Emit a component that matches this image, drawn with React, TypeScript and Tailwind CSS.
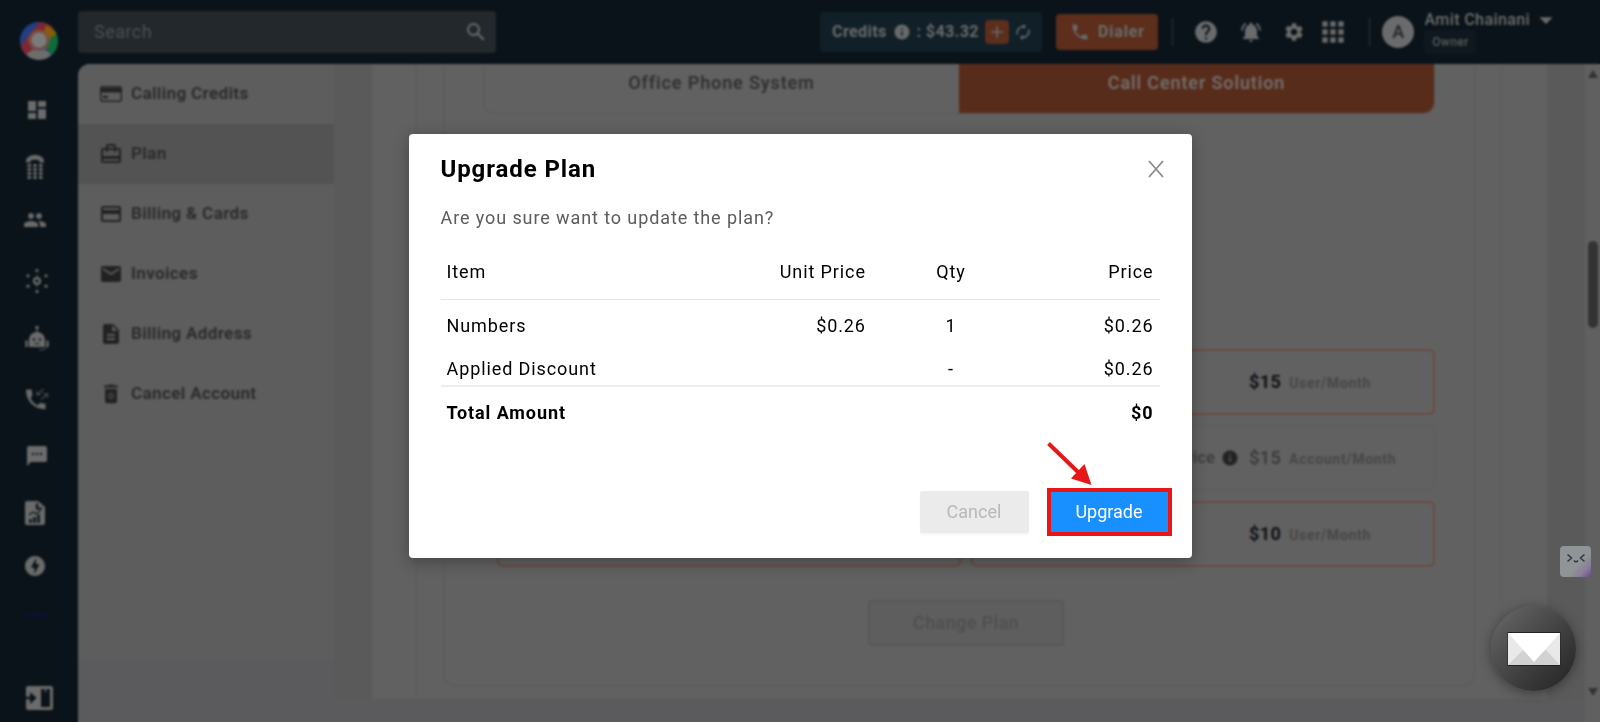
import React from "react";
import {
  MdDashboard,
  MdPeople,
  MdSms,
  MdOfflineBolt,
  MdSearch,
  MdPhone,
  MdHelp,
  MdSettings,
  MdApps,
  MdNotificationsActive,
  MdInfo,
  MdAdd,
  MdArrowDropDown,
  MdOutlineCardTravel,
  MdCreditCard,
  MdEmail,
  MdDescription,
} from "react-icons/md";

function Logo() {
  return (
    <svg viewBox="0 0 40 40" className="size-[38px]" aria-hidden="true">
      <clipPath id="logo-clip">
        <circle cx="20" cy="20" r="20" />
      </clipPath>
      <g clipPath="url(#logo-clip)">
        <rect width="40" height="40" fill="#1d3a7c" />
        <path d="M19 0 L28 0 L36 6 L22 16 L8 28 L3 32 L0 26 Z" fill="#7c2731" />
        <path d="M0 0 H21 L0 24 Z" fill="#213f86" />
        <path d="M28 3 L40 12 L32 20 L24 12 Z" fill="#8a5c06" />
        <path d="M38 12 L42 20 L36 36 L24 24 Z" fill="#106b37" />
        <path d="M2 31 L10 21 L17 28 L8 38 Z" fill="#7c2731" />
        <path d="M8 20 a12 12 0 0 1 24 0 L27 30 H13 Z" fill="#7d5048" opacity="0.8" />
        <circle cx="20" cy="19" r="8" fill="#7b7b78" />
        <path d="M7 34 Q12 28 20 30 Q28 28 33 34 L28 40 H12 Z" fill="#6d6d6a" />
      </g>
    </svg>
  );
}

function Keypad() {
  return (
    <svg viewBox="0 0 18 24" className="h-6 w-[18px]" fill="currentColor" aria-hidden="true">
      <path d="M0 6.5C0 2.5 4 0 9 0s9 2.500 9 6.500v1h-4.500V5.500C12 4.400 6 4.400 4.500 5.500v2H0z" />
      {[9, 13, 17, 21].map((y) =>
        [1.5, 7.2, 13].map((x) => <rect key={`${x}-${y}`} x={x} y={y} width="3.6" height="3" rx="0.8" />)
      )}
    </svg>
  );
}

function Hub() {
  return (
    <svg viewBox="0 0 24 24" className="h-6 w-6" aria-hidden="true">
      <circle cx="12" cy="12" r="3" fill="none" stroke="currentColor" strokeWidth="2.400" />
      <path d="M12 5v4M12 15v4" stroke="currentColor" strokeWidth="0.6" />
      {[[12, 1.6], [12, 22.4], [3, 6.8], [21, 6.8], [3, 17.2], [21, 17.2]].map(([x, y]) => (
        <circle key={`${x}-${y}`} cx={x} cy={y} r="1.600" fill="currentColor" />
      ))}
    </svg>
  );
}

function Robot() {
  return (
    <svg viewBox="0 0 24 26" className="h-[26px] w-6" aria-hidden="true">
      <circle cx="12" cy="2.500" r="1.800" fill="currentColor" />
      <path d="M11.400 4h1.200v4h-1.200z" fill="currentColor" />
      <path d="M4 22v-7a8 8 0 0 1 16 0v7z" fill="currentColor" />
      <path d="M1.500 16.500v4.500M22.500 16.500v4.500" stroke="currentColor" strokeWidth="2.400" strokeLinecap="round" />
      <circle cx="9" cy="14.500" r="1.200" fill="#0a1319" />
      <circle cx="15" cy="14.500" r="1.200" fill="#0a1319" />
      <path d="M9.500 19.500 12 18l2.500 1.500" fill="none" stroke="#0a1319" strokeWidth="1" />
      <path d="M22 21.500c-1 3-4 3.500-8 3.300" fill="none" stroke="currentColor" strokeWidth="0.800" />
    </svg>
  );
}

function CallFlow() {
  return (
    <svg viewBox="0 0 24 24" className="h-6 w-6" aria-hidden="true">
      <path
        d="M5.600 11.500c1.500 3 3.900 5.300 6.900 6.900l2.300-2.300c.3-.3.700-.4 1.100-.2 1.200.4 2.400.6 3.700.6.600 0 1 .5 1 1v3.800c0 .600-.4 1-1 1C9.300 22.300 1 14 1 3.600c0-.600.4-1 1-1h3.800c.500 0 1 .4 1 1 0 1.300.2 2.500.600 3.700.1.400 0 .800-.2 1.100z"
        fill="currentColor"
      />
      <path
        d="M18.500 2l-6 5.500M12 4v3.800h4M16 12.500l6-5M18 6.800h4.500V11"
        fill="none"
        stroke="currentColor"
        strokeWidth="1.100"
        opacity="0.700"
      />
    </svg>
  );
}

function Report() {
  return (
    <svg viewBox="0 0 20 24" className="h-6 w-5" aria-hidden="true">
      <path d="M2 0h11l7 6v16a2 2 0 0 1-2 2H2a2 2 0 0 1-2-2V2a2 2 0 0 1 2-2z" fill="currentColor" />
      <path d="M12 2.500v5h5" fill="none" stroke="#0a1319" strokeWidth="2.200" />
      <path d="M5.500 22v-4M9.500 22v-6M13.500 22v-8.500" stroke="#0a1319" strokeWidth="2.600" />
      <path d="M4 14l4-3 3 2 4.500-3.500" fill="none" stroke="#0a1319" strokeWidth="1.200" />
    </svg>
  );
}

function PanelToggle() {
  return (
    <svg viewBox="0 0 27 24" className="h-6 w-[27px]" aria-hidden="true">
      <rect width="27" height="24" rx="2" fill="currentColor" />
      <rect x="15" y="3" width="9" height="18" fill="#0a1319" />
      <path d="M18 3h3v3h-3z" fill="currentColor" opacity="0.500" />
      <path d="M0 12h7" stroke="#0a1319" strokeWidth="2.400" />
      <path d="M4.500 7l5.500 5-5.500 5z" fill="#0a1319" stroke="#0a1319" strokeWidth="1" />
    </svg>
  );
}

function CreditsCard() {
  return (
    <svg viewBox="0 0 22 16" className="h-4 w-[22px]" aria-hidden="true">
      <rect x="0.700" y="0.700" width="20.600" height="14.600" rx="2" fill="none" stroke="currentColor" strokeWidth="1.400" />
      <path d="M1 2h20v4.500H1z" fill="currentColor" />
      <path d="M3 11h5" stroke="currentColor" strokeWidth="2.600" />
    </svg>
  );
}

function BinCross() {
  return (
    <svg viewBox="0 0 20 20" className="h-5 w-5" fill="currentColor" aria-hidden="true">
      <path d="M7.500 0.500h5l1 1H17v2H3v-2h3.500z" />
      <path
        fillRule="evenodd"
        d="M4 5h12v12.500a1.800 1.800 0 0 1-1.800 1.800H5.800A1.800 1.800 0 0 1 4 17.500zM7.500 9.500v5.500h5v-5.500z"
      />
      <path d="M7.500 10l5 5M12.500 10l-5 5" stroke="currentColor" strokeWidth="1.100" />
    </svg>
  );
}

function Refresh() {
  return (
    <svg viewBox="0 0 16 16" className="h-4 w-4" fill="none" stroke="currentColor" strokeWidth="1.700" aria-hidden="true">
      <path d="M2.500 10.500A6 6 0 0 1 8.500 2.500M13.500 5.500A6 6 0 0 1 7.500 13.500" />
      <path d="M8 0l3.200 2.600L8 5.200zM8 10.800l-3.200 2.600L8 16z" fill="currentColor" stroke="none" />
    </svg>
  );
}

const railItems = [
  { label: "Dashboard", icon: <MdDashboard className="size-6" />, pad: "" },
  { label: "Numbers", icon: <Keypad />, pad: "pr-1" },
  { label: "Contacts", icon: <MdPeople className="size-6" />, pad: "pr-1 pb-2" },
  { label: "Integrations", icon: <Hub />, pad: "" },
  { label: "Bots", icon: <Robot />, pad: "" },
  { label: "Call flows", icon: <CallFlow />, pad: "pt-2" },
  { label: "Messages", icon: <MdSms className="size-6" />, pad: "pt-2" },
  { label: "Reports", icon: <Report />, pad: "pr-1 pt-2" },
  { label: "Power dialer", icon: <MdOfflineBolt className="size-6" />, pad: "pr-1" },
];

const menuItems = [
  { label: "Calling Credits", icon: <CreditsCard />, active: false },
  { label: "Plan", icon: <MdOutlineCardTravel className="size-6" />, active: true },
  { label: "Billing & Cards", icon: <MdCreditCard className="size-6" />, active: false },
  { label: "Invoices", icon: <MdEmail className="size-6" />, active: false },
  { label: "Billing Address", icon: <MdDescription className="size-6" />, active: false },
  { label: "Cancel Account", icon: <BinCross />, active: false },
];

const planRows = [
  { price: "$15", unit: "User/Month", selected: true, label: "" },
  { price: "$15", unit: "Account/Month", selected: false, label: "Price" },
  { price: "$10", unit: "User/Month", selected: true, label: "" },
];

function Rail() {
  return (
    <nav className="flex w-[78px] shrink-0 flex-col bg-[#0a1319] pr-1 text-[#6a6b6a]">
      <a href="#home" aria-label="Home" className="flex h-[81px] items-center justify-center pl-1">
        <Logo />
      </a>
      {railItems.map((item) => (
        <a
          key={item.label}
          href="#rail"
          aria-label={item.label}
          className={`flex h-[57px] items-center justify-center ${item.pad}`}
        >
          {item.icon}
        </a>
      ))}
      <div className="mx-auto mt-5 h-0.5 w-5 bg-[#06104a]" />
      <button type="button" aria-label="Toggle panel" className="mt-auto mb-3 flex justify-center pl-1">
        <PanelToggle />
      </button>
    </nav>
  );
}

function Header() {
  return (
    <header className="flex h-16 shrink-0 items-center bg-[#0a1319] text-[#6a6b6c]">
      <label className="flex h-[42px] w-[418px] items-center rounded bg-[#22282b] px-4">
        <input
          type="search"
          aria-label="Search"
          placeholder="Search"
          className="min-w-0 flex-1 bg-transparent text-lg tracking-wide outline-none placeholder:text-[#4a4f52]"
        />
        <MdSearch className="-mr-2 size-6" />
      </label>
      <div className="ml-auto flex h-full items-center">
        <div className="mr-3.5 flex h-10 w-[222px] items-center justify-center gap-1.5 rounded bg-[#101f28] text-base font-bold text-[#68696a]">
          <span>Credits</span>
          <MdInfo className="size-[18px]" />
          <span>: $43.32</span>
          <button type="button" aria-label="Add credits" className="flex size-6 items-center justify-center rounded bg-[#5c2e1b]">
            <MdAdd className="size-5" />
          </button>
          <button type="button" aria-label="Refresh credits">
            <Refresh />
          </button>
        </div>
        <button
          type="button"
          className="flex h-9 w-[102px] items-center justify-center gap-2 rounded bg-[#5c2e1b] text-base font-bold tracking-wider"
        >
          <MdPhone className="size-5" />
          Dialer
        </button>
        <div className="ml-3.5 h-7 w-px bg-[#2d3336]" />
        <button type="button" aria-label="Help" className="ml-5">
          <MdHelp className="size-[26px]" />
        </button>
        <button type="button" aria-label="Notifications" className="ml-5">
          <MdNotificationsActive className="size-6" />
        </button>
        <button type="button" aria-label="Settings" className="ml-5">
          <MdSettings className="size-[22px]" />
        </button>
        <button type="button" aria-label="Apps" className="ml-3">
          <MdApps className="size-8" />
        </button>
        <div className="ml-5 h-7 w-px bg-[#2d3336]" />
        <div className="ml-3 flex size-8 items-center justify-center rounded-full bg-[#6a6b6c] text-lg font-medium text-[#22282b]">
          A
        </div>
        <div className="mr-[38px] ml-2.5">
          <button type="button" className="flex h-5 items-center text-base font-medium">
            Amit Chainani
            <MdArrowDropDown className="size-8" />
          </button>
          <div className="flex h-6 w-[52px] items-center justify-center rounded bg-[#0f181e] text-xs font-medium text-[#55585a]">
            Owner
          </div>
        </div>
      </div>
    </header>
  );
}

function PlanRow({ row }: { row: (typeof planRows)[number] }) {
  const border = row.selected ? "border-2 border-[#694b42]" : "border border-[#5b5b5b]";
  return (
    <div className="grid grid-cols-2 gap-2.5">
      <div className={`h-[66px] rounded-md ${border}`} />
      <div className={`flex h-[66px] items-center rounded-md ${border}`}>
        <div className="flex w-[60%] items-center justify-end gap-1.5 pr-2.5 text-base font-medium text-[#3a3a3a]">
          {row.label && (
            <>
              <span>{row.label}</span>
              <MdInfo className="size-[18px] text-[#232323]" />
            </>
          )}
        </div>
        <span className={`text-lg ${row.selected ? "font-bold text-[#111]" : "font-medium text-[#3a3a3a]"}`}>{row.price}</span>
        <span className="mt-0.5 ml-2 text-sm font-bold tracking-wider text-[#474747]">{row.unit}</span>
      </div>
    </div>
  );
}

function PlanPage() {
  return (
    <div className="mb-[23px] flex min-w-0 flex-1 bg-[#616161] pr-[45px] pl-11">
      <div className="flex flex-1 border-x border-[#5a5a5a] px-[26px] pb-[13px]">
        <div className="flex flex-1 flex-col rounded-b-xl border border-t-0 border-[#585858] px-[39px]">
          <div className="flex h-[50px] overflow-hidden rounded-b-xl border border-t-0 border-[#585858] text-lg font-medium tracking-wider">
            <button type="button" className="flex-1 pb-3 text-[#2e2e2e]">
              Office Phone System
            </button>
            <button type="button" className="flex-1 bg-[#582c1b] pb-3 text-[#747170]">
              Call Center Solution
            </button>
          </div>
          <div className="mt-[235px] flex flex-col gap-2.5 pl-3.5">
            {planRows.map((row, i) => (
              <PlanRow key={i} row={row} />
            ))}
          </div>
          <div className="mt-[33px] flex justify-center pl-3.5">
            <button
              type="button"
              className="h-[46px] w-[196px] rounded border-2 border-[#585858] bg-[#5e5e5e] text-lg font-medium text-[#4f4f4f]"
            >
              Change Plan
            </button>
          </div>
        </div>
      </div>
    </div>
  );
}

function UpgradeDialog() {
  return (
    <section
      role="dialog"
      aria-labelledby="dialog-title"
      className="w-[783px] rounded bg-white px-8 pt-[17px] pb-[22px] text-lg tracking-wider text-black shadow-[0_4px_16px_rgba(0,0,0,0.3)]"
    >
      <div className="flex items-center justify-between">
        <h2 id="dialog-title" className="text-2xl leading-9 font-bold">
          Upgrade Plan
        </h2>
        <button type="button" aria-label="Close" className="-mr-1.5 p-0.5">
          <svg viewBox="0 0 16 18" className="h-[18px] w-4" fill="none" stroke="#8c8c8c" strokeWidth="1.800" aria-hidden="true">
            <path d="M1 1l14 16M15 1L1 17" />
          </svg>
        </button>
      </div>
      <p className="mt-[17px] leading-7 text-[#5c5c5c]">Are you sure want to update the plan?</p>
      <table className="mt-[13px] w-full table-fixed">
        <thead>
          <tr className="h-[54px] border-b border-[#e4e4e4]">
            <th className="w-[40%] px-1.5 text-left font-normal">Item</th>
            <th className="w-[20%] px-1.5 text-right font-normal">Unit Price</th>
            <th className="w-[22%] px-1.5 text-center font-normal">Qty</th>
            <th className="w-[18%] px-1.5 text-right font-normal">Price</th>
          </tr>
        </thead>
        <tbody>
          <tr className="h-[54px]">
            <td className="px-1.5">Numbers</td>
            <td className="px-1.5 text-right">$0.26</td>
            <td className="px-1.5 text-center">1</td>
            <td className="px-1.5 text-right">$0.26</td>
          </tr>
          <tr className="h-[33px] border-b-2 border-[#ededed]">
            <td className="px-1.5">Applied Discount</td>
            <td />
            <td className="px-1.5 text-center">-</td>
            <td className="px-1.5 text-right">$0.26</td>
          </tr>
          <tr className="h-[52px] font-bold">
            <td className="px-1.5">Total Amount</td>
            <td />
            <td />
            <td className="px-1.5 text-right">$0</td>
          </tr>
        </tbody>
      </table>
      <div className="-mr-3 mt-[50px] flex items-center justify-end gap-[18px] tracking-normal">
        <button
          type="button"
          className="h-[42px] w-[109px] rounded-xs bg-[#ebebeb] text-lg text-[#b8b8b8] shadow-[0_2px_2px_rgba(0,0,0,0.04)]"
        >
          Cancel
        </button>
        <div className="relative">
          <button type="button" className="h-12 w-[125px] border-4 border-[#e81717] bg-[#1890ff] text-lg text-white">
            Upgrade
          </button>
          <svg viewBox="0 0 46 44" className="absolute bottom-full left-0 mb-0.5 h-11 w-[46px]" aria-hidden="true">
            <path d="M1.500 1.500L31 30" stroke="#e81717" strokeWidth="4" />
            <path d="M44.500 43L24 36.500 37.500 22z" fill="#e81717" />
          </svg>
        </div>
      </div>
    </section>
  );
}

function MailBubble() {
  return (
    <button
      type="button"
      aria-label="Open inbox"
      className="absolute right-6 bottom-[31px] flex size-[85px] items-center justify-center rounded-full bg-linear-to-br from-[#6a6a6a] to-[#222] shadow-[0_2px_12px_rgba(0,0,0,0.4)]"
    >
      <svg viewBox="0 0 54 34" className="h-[34px] w-[54px] overflow-visible" aria-hidden="true">
        <rect x="0.500" y="0" width="53" height="34" fill="#222" />
        <rect x="1" y="1" width="52" height="32" fill="#e9e9e9" />
        <path d="M1 33L16 18l11 9 12-9 14 15z" fill="#d2d2d2" />
        <path d="M1 1h52L27 30z" fill="#fff" />
      </svg>
    </button>
  );
}

function Assistant() {
  return (
    <button
      type="button"
      aria-label="Assistant"
      className="absolute right-[9px] bottom-[145px] flex size-[31px] items-start justify-center rounded-sm bg-[linear-gradient(135deg,#8f9496_60%,#8a7d9a_80%,#6c4593)] pt-1.5"
    >
      <svg viewBox="0 0 20 12" className="h-3 w-5" fill="none" stroke="#333a40" strokeWidth="1.600" aria-hidden="true">
        <path d="M1.500 2.500L5.500 6l-4 3.500M18.500 2.500L14.500 6l4 3.500M8 8.500q2 2.600 4 0" />
      </svg>
    </button>
  );
}

export default function App() {
  return (
    <div className="relative flex min-h-screen bg-[#0a1319] font-[Roboto,sans-serif] tracking-wide">
      <Rail />
      <div className="flex min-w-0 flex-1 flex-col">
        <Header />
        <main className="flex flex-1 overflow-hidden rounded-tl-xl bg-[#5b5b5d]">
          <aside className="mb-[62px] w-64 shrink-0 bg-[#5d5d5d]">
            <ul>
              {menuItems.map((item) => (
                <li key={item.label}>
                  <a
                    href="#menu"
                    className={`flex h-[60px] items-center gap-2 px-[21px] text-[17px] font-semibold text-[#2a2a2a] ${item.active ? "bg-[#535353]" : ""}`}
                  >
                    <span className="flex w-6 justify-center text-[#222]">{item.icon}</span>
                    {item.label}
                  </a>
                </li>
              ))}
            </ul>
          </aside>
          <div className="mb-[23px] w-[38px] shrink-0 bg-[#5a5a5a]" />
          <PlanPage />
          <div className="mb-[23px] w-[38px] shrink-0 bg-[#5a5a5a]" />
          <div className="flex w-[15px] shrink-0 flex-col items-center bg-[#606060] py-1.5">
            <svg viewBox="0 0 10 8" className="h-2 w-2.5" fill="#333" aria-hidden="true">
              <path d="M5 0l5 8H0z" />
            </svg>
            <div className="mt-[163px] h-[87px] w-2.5 rounded-full bg-[#333]" />
            <svg viewBox="0 0 10 8" className="mt-auto mb-5 h-2 w-2.5" fill="#333" aria-hidden="true">
              <path d="M5 8l5-8H0z" />
            </svg>
          </div>
        </main>
      </div>
      <div className="absolute inset-0 flex items-start justify-center pt-[134px] backdrop-blur-[1px]">
        <UpgradeDialog />
      </div>
      <Assistant />
      <MailBubble />
    </div>
  );
}
